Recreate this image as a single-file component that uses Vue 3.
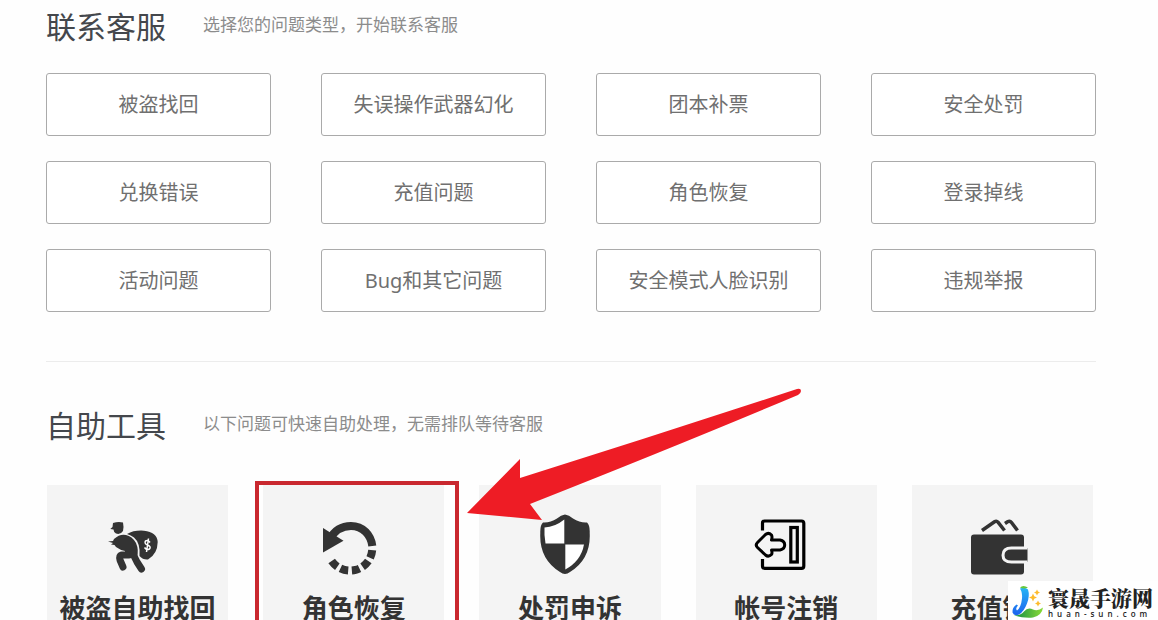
<script setup>
const topics = [
  '被盗找回', '失误操作武器幻化', '团本补票', '安全处罚',
  '兑换错误', '充值问题', '角色恢复', '登录掉线',
  '活动问题', 'Bug和其它问题', '安全模式人脸识别', '违规举报',
]

const tools = [
  { icon: 'thief', label: '被盗自助找回' },
  { icon: 'restore', label: '角色恢复', marked: true },
  { icon: 'shield', label: '处罚申诉' },
  { icon: 'exit', label: '帐号注销' },
  { icon: 'wallet', label: '充值错误' },
]
</script>

<template>
  <main class="page">
    <section>
      <header class="head">
        <h2>联系客服</h2>
        <p>选择您的问题类型，开始联系客服</p>
      </header>
      <div class="topics">
        <button v-for="t in topics" :key="t" type="button" class="topic">{{ t }}</button>
      </div>
    </section>

    <hr class="divider" />

    <section>
      <header class="head">
        <h2>自助工具</h2>
        <p>以下问题可快速自助处理，无需排队等待客服</p>
      </header>
      <div class="tools">
        <a v-for="t in tools" :key="t.icon" href="#" class="tool">
          <svg class="icon" viewBox="0 0 70 62" aria-hidden="true">
            <g v-if="t.icon === 'thief'" fill="#333">
              <path d="M9.500 14 L10 10 Q15 8.500 20 9.500 Q21 14 20 18 Q17.500 22 13 20.500 Q10.500 19 10.500 16.500 L7.300 16 Z" />
              <path d="M24 21 Q31 17 41 17.700 Q54 19 54.700 29 Q54.500 41 45 46.500 Q40 47 36.500 43 Q37.500 30 31 24.500 Q28 22 24 21 Z" />
              <path d="M11 26 Q17 20.500 23 22 Q29 23 33 30 Q36 37 34 44 L22 44 L22 38 Q17 37 13 34 L11.500 32 L8 31.500 L10 30 L5 28.500 L10 28 Z" />
              <path d="M26 42 L18.500 42 Q16 43 17 47 L20 54" fill="none" stroke="#333" stroke-width="7" stroke-linecap="round" stroke-linejoin="round" />
              <path d="M30 41 L34 49 L38.500 56" fill="none" stroke="#333" stroke-width="7" stroke-linecap="round" stroke-linejoin="round" />
              <path d="M47 29.500 Q45 26.500 42.500 28 Q41 30.500 44.500 32 Q48.500 33.500 46.500 36 Q43.500 37.500 41.500 34.500 M45.500 25.500 L43.500 39" fill="none" stroke="#fff" stroke-width="1.500" />
            </g>
            <g v-else-if="t.icon === 'restore'" fill="none" stroke="#333" stroke-width="8">
              <path d="M53.300 33 C52 22 44 13 32 13 C23 13 15.500 17.500 11 26" />
              <path d="M53.200 37.200 A22.300 22.300 0 0 1 12.500 47.800" stroke-dasharray="8 3.600" />
              <path d="M4 15 V39.500 L24.500 27.700 Z" fill="#333" stroke="none" />
            </g>
            <g v-else-if="t.icon === 'shield'">
              <path d="M30 1.500 Q34 2 38 5.500 Q45 10 52 9.500 Q55 12 54.700 20 Q56 46 35 59 Q30 63 25 59 Q4 46 5.300 20 Q5 12 8 9.500 Q15 10 22 5.500 Q26 2 30 1.500 Z" fill="#333" />
              <path d="M29.300 6.500 V30.500 H10.500 Q9 22 9.500 14.500 Q20 14 29.300 6.500 Z" fill="#fff" />
              <path d="M30.300 31.500 H49 Q46 48 30.300 56.500 Z" fill="#fff" />
            </g>
            <g v-else-if="t.icon === 'exit'" fill="none" stroke="#000" stroke-width="3.200">
              <path d="M11.500 17.500 V10 Q11.500 8 13.500 8 H50.500 Q52.800 8 52.800 10.300 V53 Q52.800 55.300 50.500 55.300 H13.500 Q11.500 55.300 11.500 53 V46" />
              <rect x="39.800" y="14.500" width="6.500" height="34.500" />
              <path d="M6.500 29.500 L14.500 21.500 Q17.500 19 20.500 22 Q21.500 24 20.500 27 H29 Q33.700 28 33.700 32 Q33.700 36 29 37 H20.500 Q21.500 40 20.500 41.500 Q17.500 44.500 14.500 42 L6.500 34.500 Q4 32 6.500 29.500 Z" stroke-width="3" stroke-linejoin="round" />
            </g>
            <g v-else fill="#333">
              <rect x="4" y="21.500" width="53" height="40" rx="3" />
              <path d="M60.500 35 H44.500 Q36 35 36 42.200 Q36 49 44.500 49 H60.500" fill="#333" stroke="#f4f4f4" stroke-width="3" />
              <path d="M15 17.500 L27.500 8.800 Q29.500 7.500 31 9.200 L37.500 17.500 M38 10.500 L40.500 8.800 Q43 7.500 44.500 9.500 L50.500 17.500" fill="none" stroke="#333" stroke-width="3.500" />
            </g>
          </svg>
          <span class="label">{{ t.label }}</span>
          <span v-if="t.marked" class="frame"></span>
          <svg v-if="t.marked" class="arrow" viewBox="0 0 336 135" aria-hidden="true">
            <path d="M0 126 L53 72 V91 Q190 48 330 2 Q334 1 334 4 Q334 6 331 8 Q215 57 63 117 L75 133 Z" fill="#ee1c25" />
          </svg>
        </a>
      </div>
    </section>

    <aside class="brand">
      <svg class="brand-logo" viewBox="0 0 36 38" aria-hidden="true">
        <defs>
          <linearGradient id="stem" x1="0" y1="0" x2="0" y2="1">
            <stop offset="0" stop-color="#27b5f5" />
            <stop offset="1" stop-color="#1c62ee" />
          </linearGradient>
          <linearGradient id="leaf" x1="0" y1="0" x2="1" y2="0">
            <stop offset="0" stop-color="#108b45" />
            <stop offset="1" stop-color="#8bdc35" />
          </linearGradient>
        </defs>
        <path d="M12 7 Q17 5 20 8 Q22 14 19 22 Q16 30 11 33 Q6 35 4.500 31 Q4 26 8.500 23 L10 24 Q7 27 9 29 Q13 26 14 17 Q14.500 11 12 7 Z" fill="url(#stem)" />
        <path d="M6 34 Q13 34 16 30 Q20 25 25 28 Q30 30 35 26 Q34 34 25 36 Q17 37 6 34 Z" fill="url(#leaf)" />
        <path d="M12 6 Q15 3 20 6 Q16 8 12 6 Z" fill="#65c83c" />
        <path d="M25 12 L26.200 14.800 L29 16 L26.200 17.200 L25 20 L23.800 17.200 L21 16 L23.800 14.800 Z M29 8 L30 10 L32 11 L30 12 L29 14 L28 12 L26 11 L28 10 Z M30 19 L31 21 L33 22 L31 23 L30 25 L29 23 L27 22 L29 21 Z" fill="#fdbb2d" />
      </svg>
      <div class="brand-text">
        <strong>寰晟手游网</strong>
        <small>huan-sun.com</small>
      </div>
    </aside>
  </main>
</template>

<style>
body {
  margin: 0;
  background: #fefefe;
}
</style>

<style scoped>
.page {
  box-sizing: border-box;
  height: 100vh;
  overflow: hidden;
  padding: 7px 62px 0 46px;
  font-family: "Noto Sans", "Noto Sans CJK SC", sans-serif;
}
.head {
  display: flex;
  align-items: center;
  gap: 37px;
  height: 40px;
}
.head h2 {
  margin: 0;
  font-size: 30px;
  line-height: 40px;
  font-weight: 400;
  color: #44474c;
}
.head p {
  margin: 0;
  padding-bottom: 4px;
  font-size: 17px;
  line-height: 24px;
  font-weight: 400;
  color: #8c8c8c;
}
.topics {
  display: grid;
  grid-template-columns: repeat(4, 1fr);
  gap: 25px 50px;
  margin-top: 26px;
}
.topic {
  height: 63px;
  padding: 0 0 3px;
  border: 1px solid #aaa;
  border-radius: 3px;
  background: #fff;
  font: inherit;
  font-size: 20px;
  color: #707070;
}
.divider {
  margin: 49px 0 44px;
  border: 0;
  border-top: 1px solid #ececec;
}
.tools {
  display: grid;
  grid-template-columns: repeat(5, 1fr);
  gap: 35px;
  margin: 39px 3px 0 1px;
}
.tool {
  position: relative;
  display: flex;
  flex-direction: column;
  align-items: center;
  gap: 15px;
  padding: 28px 0 40px;
  background: #f4f4f4;
  color: #333;
  text-decoration: none;
}
.icon {
  width: 70px;
  height: 62px;
}
.label {
  font-size: 26px;
  line-height: 36px;
  font-weight: 700;
  white-space: nowrap;
}
.frame {
  position: absolute;
  inset: -4px -15px -4px -8px;
  border: 4px solid #c9282f;
}
.arrow {
  position: absolute;
  z-index: 1;
  left: 204px;
  top: -98px;
  width: 336px;
  height: 135px;
}
.brand {
  position: fixed;
  z-index: 2;
  right: 0;
  bottom: 0;
  display: flex;
  gap: 4px;
  padding-right: 5px;
  background: #fff;
}
.brand-logo {
  width: 36px;
  height: 39px;
}
.brand-text {
  display: flex;
  flex-direction: column;
  padding-top: 4px;
  color: #222;
}
.brand-text strong {
  font-family: "Noto Serif CJK SC", "Noto Sans CJK SC", serif;
  font-size: 21px;
  line-height: 24px;
  font-weight: 900;
}
.brand-text small {
  font-family: "Open Sans", sans-serif;
  font-size: 8px;
  line-height: 10px;
  font-weight: 600;
  letter-spacing: 4px;
}
</style>
